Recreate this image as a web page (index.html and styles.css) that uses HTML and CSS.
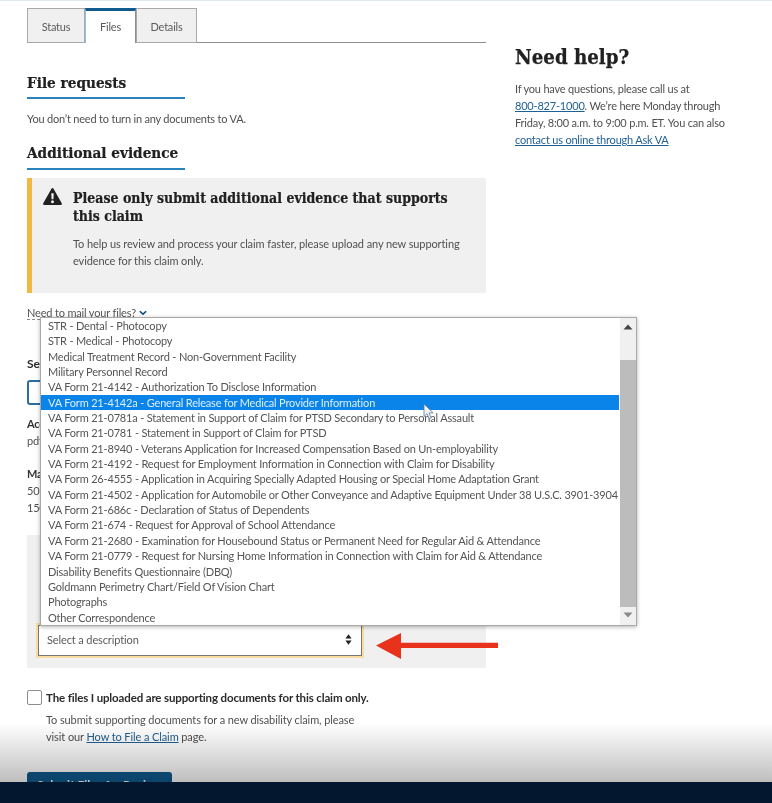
FILE: index.html
```html
<!DOCTYPE html>
<html lang="en">
<head>
<meta charset="utf-8">
<title>Files</title>
<link rel="stylesheet" href="styles.css">
</head>
<body>
<div class="page">
  <div class="layout">
    <main class="main">
      <nav class="tabs">
        <a class="tab">Status</a>
        <a class="tab tab-active">Files</a>
        <a class="tab">Details</a>
      </nav>
      <h2 class="section-title first">File requests</h2>
      <p class="copy no-docs">You don’t need to turn in any documents to VA.</p>
      <h2 class="section-title second">Additional evidence</h2>
      <section class="alert">
        <svg class="alert-icon" viewBox="0 0 20 18" aria-hidden="true"><path fill-rule="evenodd" d="M10 0c.5 0 .9.3 1.1.7l8.7 15.4c.4.8-.1 1.9-1.1 1.9H1.3C.3 18-.2 16.900.2 16.100L8.900.7C9.100.3 9.500 0 10 0zM8.700 5.500l.3 6.500h2l.3-6.500zM10 13a1.600 1.600 0 1 0 0 3.200A1.600 1.600 0 0 0 10 13z"/></svg>
        <div class="alert-body">
          <h3 class="alert-title">Please only submit additional evidence that supports this claim</h3>
          <p class="copy alert-copy">To help us review and process your claim faster, please upload any new supporting evidence for this claim only.</p>
        </div>
      </section>
      <div class="mail-row"><span class="mail-link">Need to mail your files?</span> <svg class="chevron" viewBox="0 0 10 7" aria-hidden="true"><path d="M1 1.300l4 3.700 4-3.700" fill="none" stroke="#0f4a80" stroke-width="2"/></svg></div>
      <h4 class="strong-label select-label">Select files to upload</h4>
      <div class="upload-btn"></div>
      <p class="copy accepted"><strong>Accepted file types:</strong><br>pdf, gif, jpeg, jpg, bmp, txt</p>
      <p class="copy max-size"><strong>Maximum file size:</strong><br>50MB (PDF only)<br>150MB</p>
      <section class="desc-panel">
        <div class="desc-select">
          <span>Select a description</span>
          <svg class="sort" viewBox="0 0 8 12" aria-hidden="true"><path d="M4 0l3.500 4.800h-7zM4 12L.5 7.200h7z"/></svg>
        </div>
      </section>
      <div class="check-row">
        <span class="checkbox"></span>
        <div>
          <div class="check-label">The files I uploaded are supporting documents for this claim only.</div>
          <p class="copy check-help">To submit supporting documents for a new disability claim, please visit our <a class="link">How to File a Claim</a> page.</p>
        </div>
      </div>
      <div class="actions">
        <a class="submit">Submit Files for Review</a>
        <a class="cancel">Cancel</a>
      </div>
    </main>
    <aside class="help">
      <h2 class="help-title">Need help?</h2>
      <p class="copy help-copy">If you have questions, please call us at <a class="link phone">800-827-1000</a>. We’re here Monday through Friday, 8:00 a.m. to 9:00 p.m. ET. You can also <a class="link">contact us online through Ask VA</a></p>
    </aside>
  </div>

  <div class="fade"></div>
  <div class="video-bar"></div>

  <div class="dropdown">
    <ul class="options">
      <li>STR - Dental - Photocopy</li>
      <li>STR - Medical - Photocopy</li>
      <li>Medical Treatment Record - Non-Government Facility</li>
      <li>Military Personnel Record</li>
      <li>VA Form 21-4142 - Authorization To Disclose Information</li>
      <li class="selected">VA Form 21-4142a - General Release for Medical Provider Information</li>
      <li>VA Form 21-0781a - Statement in Support of Claim for PTSD Secondary to Personal Assault</li>
      <li>VA Form 21-0781 - Statement in Support of Claim for PTSD</li>
      <li>VA Form 21-8940 - Veterans Application for Increased Compensation Based on Un-employability</li>
      <li>VA Form 21-4192 - Request for Employment Information in Connection with Claim for Disability</li>
      <li>VA Form 26-4555 - Application in Acquiring Specially Adapted Housing or Special Home Adaptation Grant</li>
      <li>VA Form 21-4502 - Application for Automobile or Other Conveyance and Adaptive Equipment Under 38 U.S.C. 3901-3904</li>
      <li>VA Form 21-686c - Declaration of Status of Dependents</li>
      <li>VA Form 21-674 - Request for Approval of School Attendance</li>
      <li>VA Form 21-2680 - Examination for Housebound Status or Permanent Need for Regular Aid &amp; Attendance</li>
      <li>VA Form 21-0779 - Request for Nursing Home Information in Connection with Claim for Aid &amp; Attendance</li>
      <li>Disability Benefits Questionnaire (DBQ)</li>
      <li>Goldmann Perimetry Chart/Field Of Vision Chart</li>
      <li>Photographs</li>
      <li>Other Correspondence</li>
    </ul>
    <div class="scrollbar">
      <svg class="scroll-arrow arrow-up" viewBox="0 0 10 6" aria-hidden="true"><path d="M5 .5l4.500 5h-9z" fill="#444"/></svg>
      <div class="scroll-thumb-space"></div>
      <div class="scroll-track"></div>
      <svg class="scroll-arrow arrow-down" viewBox="0 0 10 6" aria-hidden="true"><path d="M5 5.500L.5.500h9z" fill="#8a8a8a"/></svg>
    </div>
  </div>

  <svg class="cursor" viewBox="0 0 12 17" aria-hidden="true"><path d="M1 1v12.500l3-2.800 2.200 5 2-.9-2.200-4.900h4.200z" fill="#f2f6fa" stroke="#5a7a99" stroke-width=".8"/></svg>
  <svg class="red-arrow" viewBox="0 0 122 26" aria-hidden="true"><path d="M0 12.500L25 0v9.800h97v5.200H25V26z" fill="#e8321c"/></svg>
</div>
</body>
</html>
```

FILE: styles.css
```css
* { box-sizing: border-box; }
html, body { margin: 0; padding: 0; background: #fff; }
body { font-family: "Lato", "Liberation Sans", sans-serif; color: #4a4a4a; }
.page { position: relative; width: 772px; height: 803px; overflow: hidden; border-top: 1px solid #dcecef; filter: blur(.35px); }
.layout { display: grid; grid-template-columns: 459px 257px; column-gap: 29px; padding-left: 27px; }
.copy { margin: 0; font-size: 11px; letter-spacing: -.2px; line-height: 17px; color: #505050; }
.link { color: #1f5f93; text-decoration: underline; }
.phone { white-space: nowrap; }

.tabs { display: flex; height: 35px; margin-top: 7px; border-bottom: 1px solid #8d8d8d; }
.tab { display: flex; align-items: center; justify-content: center; height: 35px; border: 1px solid #a9a9a9; background: #f0f0f0; font-size: 11px; letter-spacing: -.2px; color: #5b5b5b; padding: 2px 14px 0; }
.tab:nth-child(1) { width: 58px; }
.tab:nth-child(3) { width: 61px; }
.tab-active { width: 51px; background: #fff; border: 0; border-top: 3px solid #0f5a8e; border-left: 1px solid #8dbfe0; border-right: 1px solid #8d8d8d; padding: 0 0 1px; height: 35px; }

.section-title { width: 158px; margin: 0; padding-bottom: 4px; font-family: "DejaVu Serif Condensed", "DejaVu Serif", serif; font-size: 15.200px; line-height: 20px; font-weight: 700; color: #212121; -webkit-text-stroke: .2px #212121; border-bottom: 2px solid #2a83bd; }
.first { margin-top: 30px; }
.second { padding-bottom: 5px; }
.no-docs { margin: 11px 0 16px; }

.alert { display: flex; height: 115px; margin-top: 8px; background: #f0f0f0; border-left: 5px solid #f1b942; padding: 10px 16px 0 11px; }
.alert-icon { width: 19px; height: 17px; flex: none; fill: #212121; margin-right: 11px; }
.alert-body { padding-top: 1px; }
.alert-title { margin: 0; font-family: "DejaVu Serif Condensed", "DejaVu Serif", serif; font-size: 14px; line-height: 18px; font-weight: 700; color: #212121; -webkit-text-stroke: .2px #212121; }
.alert-copy { margin-top: 10px; letter-spacing: -.1px; }

.mail-row { display: flex; align-items: center; gap: 3px; height: 16px; margin-top: 12px; font-size: 11px; letter-spacing: -.17px; color: #555; }
.mail-link { border-bottom: 1px dashed #8a8a8a; }
.chevron { width: 8px; height: 6px; }

.strong-label { margin: 35px 0 0; font-size: 12px; line-height: 16px; color: #2b2b2b; }
.upload-btn { width: 146px; height: 25px; margin-top: 8px; border: 2px solid #2a6ea3; border-radius: 3px; background: #fff; }
.accepted { margin-top: 10px; }
.max-size { margin-top: 16px; }
.copy strong { color: #333; }

.desc-panel { display: flex; flex-direction: column; justify-content: flex-end; height: 133px; margin-top: 19px; padding: 0 0 12px 11px; background: #f0f0f0; }
.desc-select { display: flex; align-items: center; justify-content: space-between; width: 324px; height: 31px; padding: 0 9px 2px 8px; background: #fff; border: 1px solid #777; box-shadow: 0 0 0 2px #f9dc9f; font-size: 11px; letter-spacing: -.12px; color: #5a5a5a; }
.sort { width: 7px; height: 11px; fill: #212121; }

.check-row { display: flex; gap: 4px; margin-top: 22px; }
.checkbox { width: 15px; height: 15px; flex: none; background: #fff; border: 1px solid #8d8d8d; border-radius: 2px; }
.check-label { font-size: 11.500px; letter-spacing: -.14px; line-height: 15px; font-weight: 700; color: #2b2b2b; }
.check-help { width: 315px; margin-top: 6px; letter-spacing: -.1px; }

.actions { display: flex; align-items: center; gap: 28px; margin-top: 27px; }
.submit { width: 145px; height: 30px; padding-top: 5px; border-radius: 3px; background: #0f5a8e; color: #fff; font-size: 12px; font-weight: 700; text-align: center; }
.cancel { font-size: 12px; color: #555; }

.help-title { margin: 42px 0 0; font-family: "DejaVu Serif Condensed", "DejaVu Serif", serif; font-size: 20.300px; line-height: 28px; font-weight: 700; color: #212121; -webkit-text-stroke: .25px #212121; }
.help-copy { width: 215px; margin-top: 9px; }

.fade { position: absolute; left: 0; right: 0; top: 722px; height: 60px; background: linear-gradient(to bottom, #fff, #bdbdbd); mix-blend-mode: multiply; }
.video-bar { position: absolute; left: 0; right: 0; top: 781px; height: 22px; background: #03182e; }

.dropdown { position: absolute; left: 40px; top: 316px; display: flex; width: 597px; height: 309px; background: #fff; border: 1px solid #a8a8a8; box-shadow: 0 1px 4px rgba(0,0,0,.3); }
.options { flex: 1; min-width: 0; margin: 0; padding: 0; list-style: none; font-size: 11px; letter-spacing: -.18px; line-height: 15.350px; color: #555; }
.options li { padding-left: 7px; height: 15.350px; white-space: nowrap; }
.options .selected { background: #0a84e8; color: #dbeeff; }
.scrollbar { display: flex; flex-direction: column; width: 16px; margin-left: 1px; background: #f0f0f0; }
.scroll-arrow { width: 10px; height: 6px; flex: none; margin-left: 3px; }
.arrow-up { margin-top: 6px; margin-bottom: 2px; }
.arrow-down { margin-top: 5px; margin-bottom: 7px; }
.scroll-thumb-space { height: 28px; flex: none; }
.scroll-track { flex: 1; background: #bcbcbc; }

.cursor { position: absolute; left: 423px; top: 402px; width: 12px; height: 17px; }
.red-arrow { position: absolute; left: 376px; top: 632px; width: 122px; height: 26px; }
```
